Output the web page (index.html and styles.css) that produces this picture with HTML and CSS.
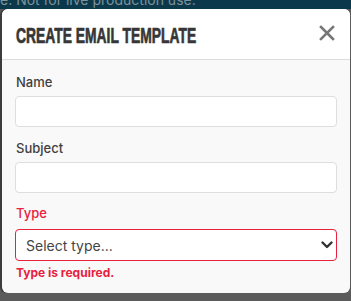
FILE: index.html
```html
<!DOCTYPE html>
<html lang="en">
<head>
<meta charset="utf-8">
<title>Create Email Template</title>
<link rel="stylesheet" href="styles.css">
</head>
<body>
<div class="banner"><span class="banner-text">e. Not for live production use.</span></div>
<div class="modal">
  <div class="modal-header">
    <h2 class="modal-title"><span class="title-text">CREATE EMAIL TEMPLATE</span></h2>
    <button class="close" type="button" aria-label="Close">
      <svg width="16" height="16" viewBox="0 0 16 16"><path d="M2 2 L14 14 M14 2 L2 14" stroke="#777" stroke-width="2.6" stroke-linecap="square" fill="none"/></svg>
    </button>
  </div>
  <div class="modal-body">
    <div class="group">
      <label class="label">Name</label>
      <input class="input" type="text">
    </div>
    <div class="group">
      <label class="label">Subject</label>
      <input class="input" type="text">
    </div>
    <div class="group invalid">
      <label class="label">Type</label>
      <div class="select-wrap">
        <select class="select"><option>Select type...</option></select>
        <svg class="chevron" width="12" height="8" viewBox="0 0 12 8"><path d="M1.5 1.5 L6 6 L10.5 1.5" stroke="#333" stroke-width="2.4" fill="none" stroke-linecap="round" stroke-linejoin="round"/></svg>
      </div>
      <div class="error">Type is required.</div>
    </div>
  </div>
</div>
</body>
</html>
```

FILE: styles.css
```css
html, body {
  margin: 0;
  padding: 0;
}
body {
  background: #5b5b5b;
  width: 351px;
  height: 301px;
  overflow: hidden;
  position: relative;
  font-family: Inter, "Noto Sans", sans-serif;
}
.banner {
  height: 9px;
  background: #0b394b;
  overflow: hidden;
}
.banner-text {
  display: block;
  margin-top: -8.6px;
  font-size: 14px;
  line-height: 17px;
  color: #7e9198;
  white-space: nowrap;
}
.modal {
  position: absolute;
  top: 9px;
  left: 2px;
  width: 348px;
  background: #f9f9f9;
  border-radius: 6px;
  box-shadow: -2px 0 0 #3c3c3c;
  overflow: hidden;
}
.modal-header {
  background: #fff;
  box-sizing: content-box;
  height: 34px;
  padding: 16px 15px 0 14px;
  border-bottom: 1px solid #dcdcdc;
  display: flex;
  justify-content: space-between;
  align-items: flex-start;
}
.modal-title {
  margin: 0;
  font-family: "Liberation Sans", Arial, sans-serif;
  font-weight: bold;
  font-size: 22px;
  line-height: 22px;
  color: #363636;
  white-space: nowrap;
}
.title-text {
  display: inline-block;
  transform: scaleX(0.63);
  transform-origin: left center;
  -webkit-text-stroke: 0.7px #363636;
}
.close {
  border: 0;
  background: none;
  padding: 0;
  margin: 0;
  width: 16px;
  height: 16px;
  display: block;
}
.close svg {
  display: block;
}
.modal-body {
  padding: 12px 13px 11px 13px;
}
.group {
  margin-bottom: 11px;
}
.group.invalid {
  margin-top: -1px;
  margin-bottom: 0;
}
.label {
  display: block;
  font-size: 13px;
  line-height: 20px;
  font-weight: 500;
  color: #3f3f3f;
  margin-bottom: 4px;
  padding-left: 1px;
}
.invalid .label {
  color: #e8213f;
  margin-bottom: 6px;
}
.input {
  display: block;
  width: 100%;
  box-sizing: border-box;
  height: 31px;
  border: 1px solid #dedede;
  border-radius: 4px;
  background: #fff;
  margin: 0;
  padding: 0 10px;
}
.select-wrap {
  position: relative;
}
.select {
  display: block;
  width: 100%;
  box-sizing: border-box;
  height: 32px;
  margin: 0;
  border: 1px solid #e8213f;
  border-radius: 4px;
  background: #fff;
  -webkit-appearance: none;
  appearance: none;
  padding: 0 30px 0 10px;
  font-family: Inter, "Noto Sans", sans-serif;
  font-size: 14px;
  color: #444;
}
.chevron {
  position: absolute;
  right: 4px;
  top: 12px;
  pointer-events: none;
}
.error {
  margin-top: 3px;
  font-size: 12px;
  line-height: 18px;
  font-weight: 700;
  color: #e8213f;
  padding-left: 1px;
}
```
